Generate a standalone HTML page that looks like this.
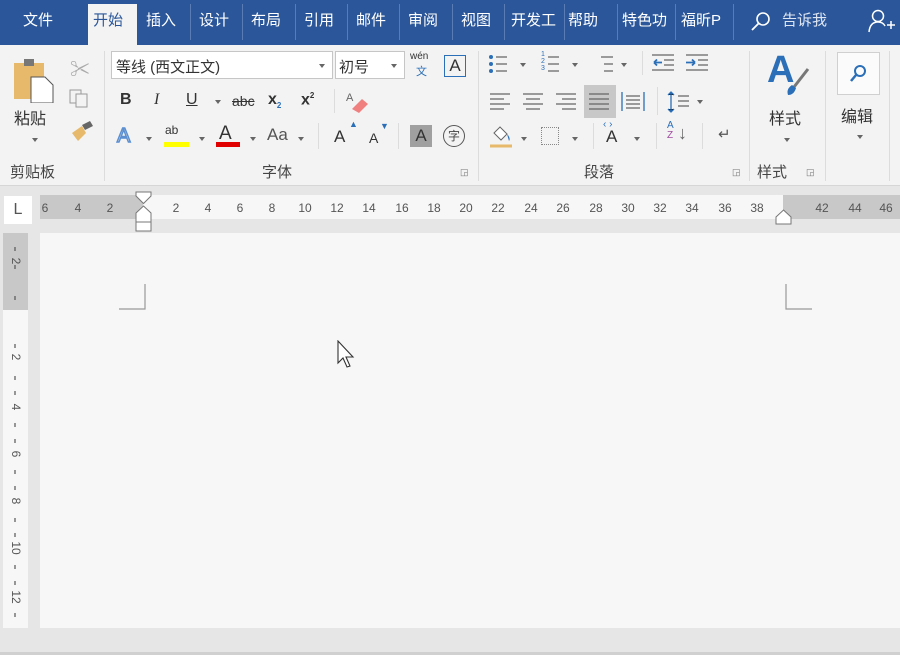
<!DOCTYPE html>
<html><head><meta charset="utf-8"><style>
*{margin:0;padding:0;box-sizing:border-box}
body{width:900px;height:655px;overflow:hidden;background:#e6e6e6;font-family:"Liberation Sans","Noto Sans CJK SC",sans-serif;position:relative;color:#444}
.a{position:absolute}
#top{left:0;top:0;width:900px;height:45px;background:#2b579a}
.tab{position:absolute;top:9px;color:#fff;font-size:15px;white-space:nowrap;overflow:hidden}
.sep{position:absolute;top:4px;width:1px;height:36px;background:#5a7cb4}
#rib{left:0;top:45px;width:900px;height:141px;background:#f3f3f3;border-bottom:1px solid #d6d6d6}
.t{position:absolute;font-size:15px;color:#333;white-space:nowrap}
.g{position:absolute;top:105px;font-size:15px;color:#444}
.vs{position:absolute;width:1px;background:#dcdcdc}
.dd{position:absolute;width:0;height:0;border-left:3px solid transparent;border-right:3px solid transparent;border-top:4px solid #666}
.rn{position:absolute;top:201px;font-size:12px;color:#555;transform:translateX(-50%)}
.vn{position:absolute;left:9px;font-size:12px;color:#555;transform:rotate(90deg);transform-origin:center;width:14px;text-align:center}
</style></head><body>
<div id="top" class="a"></div>
<div class="a" style="left:88px;top:4px;width:49px;height:41px;background:#f3f3f3"></div>
<div class="tab" style="left:23px">文件</div>
<div class="tab" style="left:93px;color:#2b579a">开始</div>
<div class="tab" style="left:146px">插入</div>
<div class="tab" style="left:199px">设计</div>
<div class="tab" style="left:251px">布局</div>
<div class="tab" style="left:304px">引用</div>
<div class="tab" style="left:356px">邮件</div>
<div class="tab" style="left:408px">审阅</div>
<div class="tab" style="left:461px">视图</div>
<div class="tab" style="left:511px;width:50px">开发工</div>
<div class="tab" style="left:568px">帮助</div>
<div class="tab" style="left:622px;width:50px">特色功</div>
<div class="tab" style="left:681px;width:50px">福昕P</div>
<div class="tab" style="left:782px;color:#dfe6f2">告诉我</div>
<div class="sep" style="left:190px"></div><div class="sep" style="left:242px"></div><div class="sep" style="left:295px"></div><div class="sep" style="left:347px"></div><div class="sep" style="left:399px"></div><div class="sep" style="left:452px"></div><div class="sep" style="left:504px"></div><div class="sep" style="left:564px"></div><div class="sep" style="left:617px"></div><div class="sep" style="left:675px"></div><div class="sep" style="left:733px"></div>
<svg class="a" style="left:750px;top:10px" width="22" height="22"><circle cx="13" cy="9" r="6" fill="none" stroke="#fff" stroke-width="1.6"/><line x1="9" y1="13" x2="2" y2="20" stroke="#fff" stroke-width="1.8"/></svg>
<svg class="a" style="left:868px;top:8px" width="32" height="26"><circle cx="10" cy="8" r="5.5" fill="none" stroke="#fff" stroke-width="1.5"/><path d="M1 24 Q2 14 10 14 Q15 14 17 18" fill="none" stroke="#fff" stroke-width="1.5"/><path d="M19 17h8M23 13v8" stroke="#fff" stroke-width="1.5"/></svg>

<div id="rib" class="a">
 <svg class="a" style="left:14px;top:12px" width="46" height="46"><rect x="0" y="6" width="30" height="36" fill="#e7b96a"/><rect x="10" y="2" width="10" height="7" fill="#777"/><path d="M17 20h14l8 8v18H17z" fill="#fff" stroke="#555"/></svg>
 <div class="t" style="left:14px;top:60px;font-size:16px">粘贴</div>
 <div class="dd" style="left:32px;top:93px"></div>
 <div class="t" style="left:70px;top:8px;color:#aaa;font-size:20px">✂</div>
 <svg class="a" style="left:69px;top:44px" width="22" height="20"><rect x="1" y="1" width="11" height="13" fill="none" stroke="#999"/><rect x="7" y="5" width="11" height="13" fill="#f3f3f3" stroke="#999"/></svg>
 <svg class="a" style="left:70px;top:76px" width="24" height="22"><path d="M12 4l8-4 3 5-8 4z" fill="#666"/><path d="M2 12l10-7 4 7-8 8z" fill="#e7b96a"/></svg>
 <div class="g" style="left:10px;top:116px">剪贴板</div>
 <div class="vs" style="left:104px;top:6px;height:130px"></div>
 <div class="a" style="left:111px;top:6px;width:222px;height:28px;background:#fff;border:1px solid #c6c6c6"></div>
 <div class="t" style="left:116px;top:11px">等线 (西文正文)</div>
 <div class="dd" style="left:319px;top:19px"></div>
 <div class="a" style="left:335px;top:6px;width:70px;height:28px;background:#fff;border:1px solid #c6c6c6"></div>
 <div class="t" style="left:339px;top:11px">初号</div>
 <div class="dd" style="left:391px;top:19px"></div>
 <div class="t" style="left:410px;top:6px;font-size:10px">wén</div>
 <div class="t" style="left:416px;top:18px;font-size:11px;color:#2b6fb8">文</div>
 <div class="a" style="left:444px;top:10px;width:22px;height:22px;border:1px solid #2b6fb8;font-size:17px;text-align:center;line-height:20px;color:#333">A</div>
 <div class="t" style="left:120px;top:46px;font-weight:bold;font-size:16px">B</div>
 <div class="t" style="left:154px;top:46px;font-style:italic;font-size:16px;font-family:'Liberation Serif',serif">I</div>
 <div class="t" style="left:186px;top:46px;text-decoration:underline;font-size:16px">U</div>
 <div class="dd" style="left:215px;top:55px"></div>
 <div class="t" style="left:232px;top:48px;text-decoration:line-through;font-size:14px">abc</div>
 <div class="t" style="left:268px;top:46px;font-weight:bold;font-size:16px">x<sub style="font-size:8px;color:#2b6fb8">2</sub></div>
 <div class="t" style="left:301px;top:46px;font-weight:bold;font-size:16px">x<sup style="font-size:8px">2</sup></div>
 <div class="vs" style="left:334px;top:44px;height:24px"></div>
 <svg class="a" style="left:344px;top:44px" width="26" height="24"><path d="M8 20l10-10 6 5-9 9z" fill="#f08080"/><text x="2" y="12" font-size="11" fill="#666">A</text></svg>
 <div class="t" style="left:117px;top:80px;font-size:20px;color:#fff;-webkit-text-stroke:1.5px #5b8fd0">A</div>
 <div class="dd" style="left:146px;top:92px"></div>
 <div class="t" style="left:165px;top:78px;font-size:12px">ab</div>
 <div class="a" style="left:164px;top:97px;width:25px;height:5px;background:#ffff00"></div>
 <div class="dd" style="left:199px;top:92px"></div>
 <div class="t" style="left:219px;top:78px;font-size:19px">A</div>
 <div class="a" style="left:216px;top:97px;width:24px;height:5px;background:#e00000"></div>
 <div class="dd" style="left:250px;top:92px"></div>
 <div class="t" style="left:267px;top:80px;font-size:17px;color:#555">Aa</div>
 <div class="dd" style="left:298px;top:92px"></div>
 <div class="vs" style="left:318px;top:78px;height:26px"></div>
 <div class="t" style="left:334px;top:82px;font-size:17px">A</div><div class="t" style="left:349px;top:74px;font-size:9px;color:#2b6fb8">▲</div>
 <div class="t" style="left:369px;top:85px;font-size:14px">A</div><div class="t" style="left:380px;top:76px;font-size:9px;color:#2b6fb8">▼</div>
 <div class="vs" style="left:398px;top:78px;height:26px"></div>
 <div class="a" style="left:410px;top:80px;width:22px;height:22px;background:#a0a0a0;font-size:17px;text-align:center;line-height:22px;color:#333">A</div>
 <div class="a" style="left:443px;top:80px;width:22px;height:22px;border:1px solid #555;border-radius:50%;font-size:12px;text-align:center;line-height:20px">字</div>
 <div class="g" style="left:262px;top:116px">字体</div>
 <div class="t" style="left:460px;top:122px;font-size:9px;color:#777">◲</div>
 <div class="vs" style="left:478px;top:6px;height:130px"></div>
 <svg class="a" style="left:488px;top:8px" width="150" height="24" stroke="#666" stroke-width="1.3"><g fill="#2b6fb8" stroke="none"><circle cx="3" cy="4" r="2"/><circle cx="3" cy="11" r="2"/><circle cx="3" cy="18" r="2"/></g><path d="M8 4h11M8 11h11M8 18h11"/><path d="M60 4h11M60 11h11M60 18h11"/><path d="M113 4h12M116 11h9M116 18h9"/></svg>
 <div class="dd" style="left:520px;top:18px"></div><div class="dd" style="left:572px;top:18px"></div><div class="dd" style="left:621px;top:18px"></div>
 <div class="t" style="left:541px;top:6px;font-size:7px;color:#2b6fb8;line-height:7px">1<br>2<br>3</div>
 <div class="vs" style="left:642px;top:6px;height:24px"></div>
 <svg class="a" style="left:652px;top:8px" width="60" height="20" stroke="#666" stroke-width="1.3"><path d="M0 2h22M12 7h10M12 12h10M0 17h22"/><path d="M2 9.5h8M2 9.5l3-3M2 9.5l3 3" stroke="#2b6fb8" stroke-width="1.8"/><path d="M34 2h22M46 7h10M46 12h10M34 17h22"/><path d="M34 9.5h9M43 9.5l-3-3M43 9.5l-3 3" stroke="#2b6fb8" stroke-width="1.8"/></svg>
 <div class="a" style="left:584px;top:40px;width:32px;height:33px;background:#c8c8c8"></div>
 <svg class="a" style="left:490px;top:47px" width="160" height="20" stroke="#666" stroke-width="1.3"><path d="M0 2h20M0 7h14M0 12h20M0 17h14"/><path d="M33 2h20M36 7h14M33 12h20M36 17h14"/><path d="M66 2h20M72 7h14M66 12h20M72 17h14"/><path d="M99 2h20M99 7h20M99 12h20M99 17h20"/><path d="M132 0v19M154 0v19" stroke="#2b6fb8"/><path d="M136 4h14M136 8h14M136 12h14M136 16h14"/></svg>
 <div class="vs" style="left:657px;top:42px;height:28px"></div>
 <svg class="a" style="left:667px;top:46px" width="24" height="22" stroke="#666" stroke-width="1.3"><path d="M4 1v20M1 4l3-3 3 3M1 18l3 3 3-3" stroke="#2b6fb8"/><path d="M11 5h11M11 10h11M11 15h11"/></svg>
 <div class="dd" style="left:697px;top:55px"></div>
 <svg class="a" style="left:488px;top:80px" width="26" height="24"><path d="M2 21h22" stroke="#e7b96a" stroke-width="3"/><path d="M6 8l6-6 7 7-6 6z" fill="#fff" stroke="#666"/><path d="M19 9q4 4 2 7" fill="#2b6fb8"/></svg>
 <div class="dd" style="left:521px;top:92px"></div>
 <div class="a" style="left:541px;top:82px;width:18px;height:18px;border:1px dotted #888"></div>
 <div class="dd" style="left:572px;top:92px"></div>
 <div class="vs" style="left:593px;top:78px;height:26px"></div>
 <div class="t" style="left:606px;top:82px;font-size:17px">A</div><div class="t" style="left:603px;top:74px;font-size:10px;color:#2b6fb8">‹ ›</div>
 <div class="dd" style="left:634px;top:92px"></div>
 <div class="vs" style="left:656px;top:78px;height:26px"></div>
 <div class="t" style="left:667px;top:76px;font-size:10px;line-height:10px;color:#2b6fb8">A<br><span style="color:#a04ca0">Z</span></div>
 <div class="t" style="left:678px;top:78px;font-size:18px;color:#666">↓</div>
 <div class="vs" style="left:702px;top:78px;height:26px"></div>
 <div class="t" style="left:718px;top:80px;font-size:15px;color:#555">↵</div>
 <div class="g" style="left:584px;top:116px">段落</div>
 <div class="t" style="left:732px;top:122px;font-size:9px;color:#777">◲</div>
 <div class="vs" style="left:749px;top:6px;height:130px"></div>
 <div class="t" style="left:767px;top:4px;font-size:38px;font-weight:bold;color:#2b6fb8">A</div>
 <svg class="a" style="left:784px;top:22px" width="28" height="30"><path d="M24 2L10 20" stroke="#777" stroke-width="3"/><path d="M8 18q-6 4-4 10q6 0 8-7z" fill="#2b6fb8"/></svg>
 <div class="t" style="left:769px;top:60px;font-size:16px">样式</div>
 <div class="dd" style="left:784px;top:93px"></div>
 <div class="g" style="left:757px;top:116px">样式</div>
 <div class="t" style="left:806px;top:122px;font-size:9px;color:#777">◲</div>
 <div class="vs" style="left:825px;top:6px;height:130px"></div>
 <div class="a" style="left:837px;top:7px;width:43px;height:43px;background:#fbfbfb;border:1px solid #d0d0d0"></div>
 <svg class="a" style="left:848px;top:17px" width="22" height="22"><circle cx="12" cy="9" r="5" fill="none" stroke="#2b6fb8" stroke-width="2"/><line x1="8" y1="13" x2="3" y2="19" stroke="#2b6fb8" stroke-width="2.5"/></svg>
 <div class="t" style="left:841px;top:58px;font-size:16px">编辑</div>
 <div class="dd" style="left:857px;top:90px"></div>
 <div class="vs" style="left:889px;top:6px;height:130px"></div>
</div>

<div class="a" style="left:4px;top:196px;width:28px;height:28px;background:#fff;font-size:16px;text-align:center;line-height:28px;color:#555">L</div>
<div class="a" style="left:40px;top:195px;width:860px;height:24px;background:#c8c8c8"></div>
<div class="a" style="left:143px;top:195px;width:640px;height:24px;background:#f7f7f7"></div>
<div class="rn" style="left:45px">6</div><div class="rn" style="left:78px">4</div><div class="rn" style="left:110px">2</div>
<div class="rn" style="left:176px">2</div><div class="rn" style="left:208px">4</div><div class="rn" style="left:240px">6</div><div class="rn" style="left:272px">8</div><div class="rn" style="left:305px">10</div><div class="rn" style="left:337px">12</div><div class="rn" style="left:369px">14</div><div class="rn" style="left:402px">16</div><div class="rn" style="left:434px">18</div><div class="rn" style="left:466px">20</div><div class="rn" style="left:498px">22</div><div class="rn" style="left:531px">24</div><div class="rn" style="left:563px">26</div><div class="rn" style="left:596px">28</div><div class="rn" style="left:628px">30</div><div class="rn" style="left:660px">32</div><div class="rn" style="left:692px">34</div><div class="rn" style="left:725px">36</div><div class="rn" style="left:757px">38</div><div class="rn" style="left:822px">42</div><div class="rn" style="left:855px">44</div><div class="rn" style="left:886px">46</div>
<svg class="a" style="left:135px;top:191px" width="18" height="42"><path d="M1 1h15v4l-7.5 7.5L1 5z" fill="#fff" stroke="#777"/><path d="M8.5 15L16 22v9H1v-9z" fill="#fff" stroke="#777"/><path d="M1 31h15v9H1z" fill="#fff" stroke="#777"/></svg>
<svg class="a" style="left:775px;top:209px" width="18" height="16"><path d="M8.5 1L16 8v7H1V8z" fill="#fff" stroke="#777"/></svg>

<div class="a" style="left:3px;top:233px;width:25px;height:395px;background:#f7f7f7"></div>
<div class="a" style="left:3px;top:233px;width:25px;height:77px;background:#c8c8c8"></div>
<div class="vn" style="top:254px">2</div>
<div class="vn" style="top:350px">2</div><div class="vn" style="top:400px">4</div><div class="vn" style="top:447px">6</div><div class="vn" style="top:494px">8</div><div class="vn" style="top:541px">10</div><div class="vn" style="top:590px">12</div>
<svg class="a" style="left:14px;top:233px" width="6" height="395" stroke="#555" stroke-width="1.2"><path d="M1 14v4M1 32v4M1 63v4M1 111v4M1 143v4M1 158v4M1 190v4M1 206v4M1 237v4M1 253v4M1 285v4M1 300v4M1 332v4M1 348v4M1 380v4"/></svg>

<div class="a" style="left:40px;top:233px;width:860px;height:395px;background:#f7f7f7"></div>
<svg class="a" style="left:118px;top:283px" width="30" height="28"><path d="M27 1v25H1" fill="none" stroke="#999" stroke-width="1.2"/></svg>
<svg class="a" style="left:784px;top:283px" width="30" height="28"><path d="M2 1v25h26" fill="none" stroke="#999" stroke-width="1.2"/></svg>
<svg class="a" style="left:337px;top:340px" width="20" height="30"><path d="M1 1v22l5-5 4 9 3-1-4-9h7z" fill="#fff" stroke="#333" stroke-width="1.1"/></svg>
<div class="a" style="left:0;top:652px;width:900px;height:3px;background:#d0d0d0"></div>
</body></html>
